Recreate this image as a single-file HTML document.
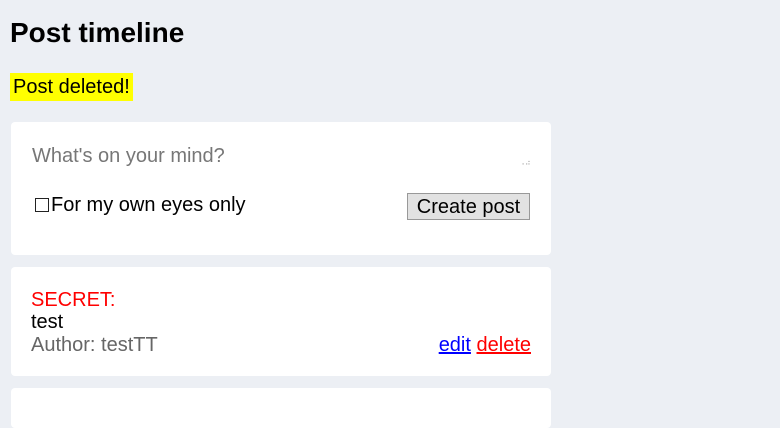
<!DOCTYPE html>
<html><head><style>
body{margin:0;background:#eceff4;font-family:"Liberation Sans",sans-serif;width:780px;height:403px;overflow:hidden;position:relative}
.a{position:absolute;white-space:nowrap}
.card{position:absolute;left:11px;width:540px;background:#fff;border-radius:4px}
</style></head><body>
<div class="a" style="left:10px;top:17px;font-size:28px;font-weight:bold">Post timeline</div>
<div class="a" style="left:10px;top:73px;height:28px;width:123px;background:#ff0;font-size:20px;line-height:28px;padding-left:3px;box-sizing:border-box">Post deleted!</div>
<div class="card" style="top:122px;height:133px">
<div class="a" style="left:21px;top:23px;font-size:20px;color:#777">What's on your mind?</div>
<div class="a" style="left:508px;top:36px;font-size:8px;color:#aaa">⠠⠴</div>
<div class="a" style="left:24px;top:76px;width:12px;height:12px;border:1px solid #222"></div>
<div class="a" style="left:40px;top:72px;font-size:20px">For my own eyes only</div>
<div class="a" style="left:396px;top:71px;width:123px;height:27px;background:#e2e2e2;border:1px solid #999;box-sizing:border-box;font-size:20px;text-align:center;line-height:27px">Create post</div>
</div>
<div class="card" style="top:267px;height:109px">
<div class="a" style="left:20px;top:22px;font-size:20px;color:#f00">SECRET:</div>
<div class="a" style="left:20px;top:44px;font-size:20px">test</div>
<div class="a" style="left:20px;top:67px;font-size:20px;color:#666">Author: testTT</div>
<div class="a" style="right:20px;top:67px;font-size:20px"><span style="color:#00f;text-decoration:underline">edit</span> <span style="color:#f00;text-decoration:underline">delete</span></div>
</div>
<div class="card" style="top:388px;height:40px"></div>
</body></html>
